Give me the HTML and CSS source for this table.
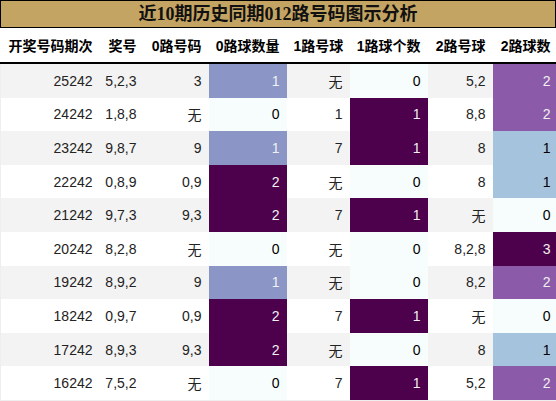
FILE: index.html
```html
<!DOCTYPE html>
<html lang="zh">
<head>
  <meta charset="UTF-8">
  <title>近10期历史同期012路号码图示分析</title>
  <link rel="stylesheet" href="styles.css">
</head>
<body>
  <div class="title">近10期历史同期012路号码图示分析</div>
  <table class="grid">
    <colgroup>
      <col class="w99"><col class="w44"><col class="w65"><col class="w78">
      <col class="w63"><col class="w78"><col class="w64"><col class="w64">
    </colgroup>
    <thead>
      <tr>
        <th>开奖号码期次</th><th>奖号</th><th>0路号码</th><th>0路球数量</th>
        <th>1路号球</th><th>1路球个数</th><th>2路号球</th><th>2路球数</th>
      </tr>
    </thead>
    <tbody>
      <tr><td>25242</td><td>5,2,3</td><td>3</td><td class="mid">1</td><td>无</td><td class="low">0</td><td>5,2</td><td class="q2">2</td></tr>
      <tr><td>24242</td><td>1,8,8</td><td>无</td><td class="low">0</td><td>1</td><td class="top">1</td><td>8,8</td><td class="q2">2</td></tr>
      <tr><td>23242</td><td>9,8,7</td><td>9</td><td class="mid">1</td><td>7</td><td class="top">1</td><td>8</td><td class="q1">1</td></tr>
      <tr><td>22242</td><td>0,8,9</td><td>0,9</td><td class="top">2</td><td>无</td><td class="low">0</td><td>8</td><td class="q1">1</td></tr>
      <tr><td>21242</td><td>9,7,3</td><td>9,3</td><td class="top">2</td><td>7</td><td class="top">1</td><td>无</td><td class="low">0</td></tr>
      <tr><td>20242</td><td>8,2,8</td><td>无</td><td class="low">0</td><td>无</td><td class="low">0</td><td>8,2,8</td><td class="top">3</td></tr>
      <tr><td>19242</td><td>8,9,2</td><td>9</td><td class="mid">1</td><td>无</td><td class="low">0</td><td>8,2</td><td class="q2">2</td></tr>
      <tr><td>18242</td><td>0,9,7</td><td>0,9</td><td class="top">2</td><td>7</td><td class="top">1</td><td>无</td><td class="low">0</td></tr>
      <tr><td>17242</td><td>8,9,3</td><td>9,3</td><td class="top">2</td><td>无</td><td class="low">0</td><td>8</td><td class="q1">1</td></tr>
      <tr><td>16242</td><td>7,5,2</td><td>无</td><td class="low">0</td><td>7</td><td class="top">1</td><td>5,2</td><td class="q2">2</td></tr>
    </tbody>
  </table>
</body>
</html>
```

FILE: styles.css
```css
body {
  margin: 0;
  font-family: "Liberation Sans", "Noto Sans CJK SC", sans-serif;
  color: #000;
  width: 556px;
}
.title {
  height: 26px;
  line-height: 26px;
  border: 1px solid #000;
  border-right-width: 1px;
  background: #c4a462;
  text-align: center;
  font-family: "Liberation Serif", "Noto Sans CJK SC", serif;
  font-size: 18px;
  font-weight: bold;
  color: #111;
  width: 554px;
}
.grid {
  width: 556px;
  table-layout: fixed;
  border-collapse: collapse;
  font-size: 14px;
}
.w99 { width: 99px; }
.w44 { width: 44px; }
.w65 { width: 65px; }
.w78 { width: 78px; }
.w63 { width: 63px; }
.w64 { width: 65px; }
.grid th {
  height: 34px;
  padding: 0 7px;
  text-align: right;
  font-weight: bold;
  background: #fff;
  border-bottom: 2px solid #000;
  white-space: nowrap;
}
.grid td {
  height: 33.6px;
  padding: 0 7px 0 0;
  text-align: right;
  white-space: nowrap;
  color: #222;
}
.grid tbody tr:nth-child(odd) { background: #f3f3f3; }
.grid tbody tr:nth-child(even) { background: #fff; }
.grid tbody tr:last-child td { border-bottom: 1px solid #eee; }
.grid tbody td:first-child { border-left: 1px solid #eee; }

/* value colours, BuPu per column */
.grid td.low { background: #f7fcfd; color: #000; }
.grid td.mid { background: #8c96c6; color: #f1f1f1; }
.grid td.top { background: #4d004b; color: #f1f1f1; }
.grid td.q1 { background: #a6c3de; color: #000; }
.grid td.q2 { background: #8b5aa9; color: #f1f1f1; }
```
